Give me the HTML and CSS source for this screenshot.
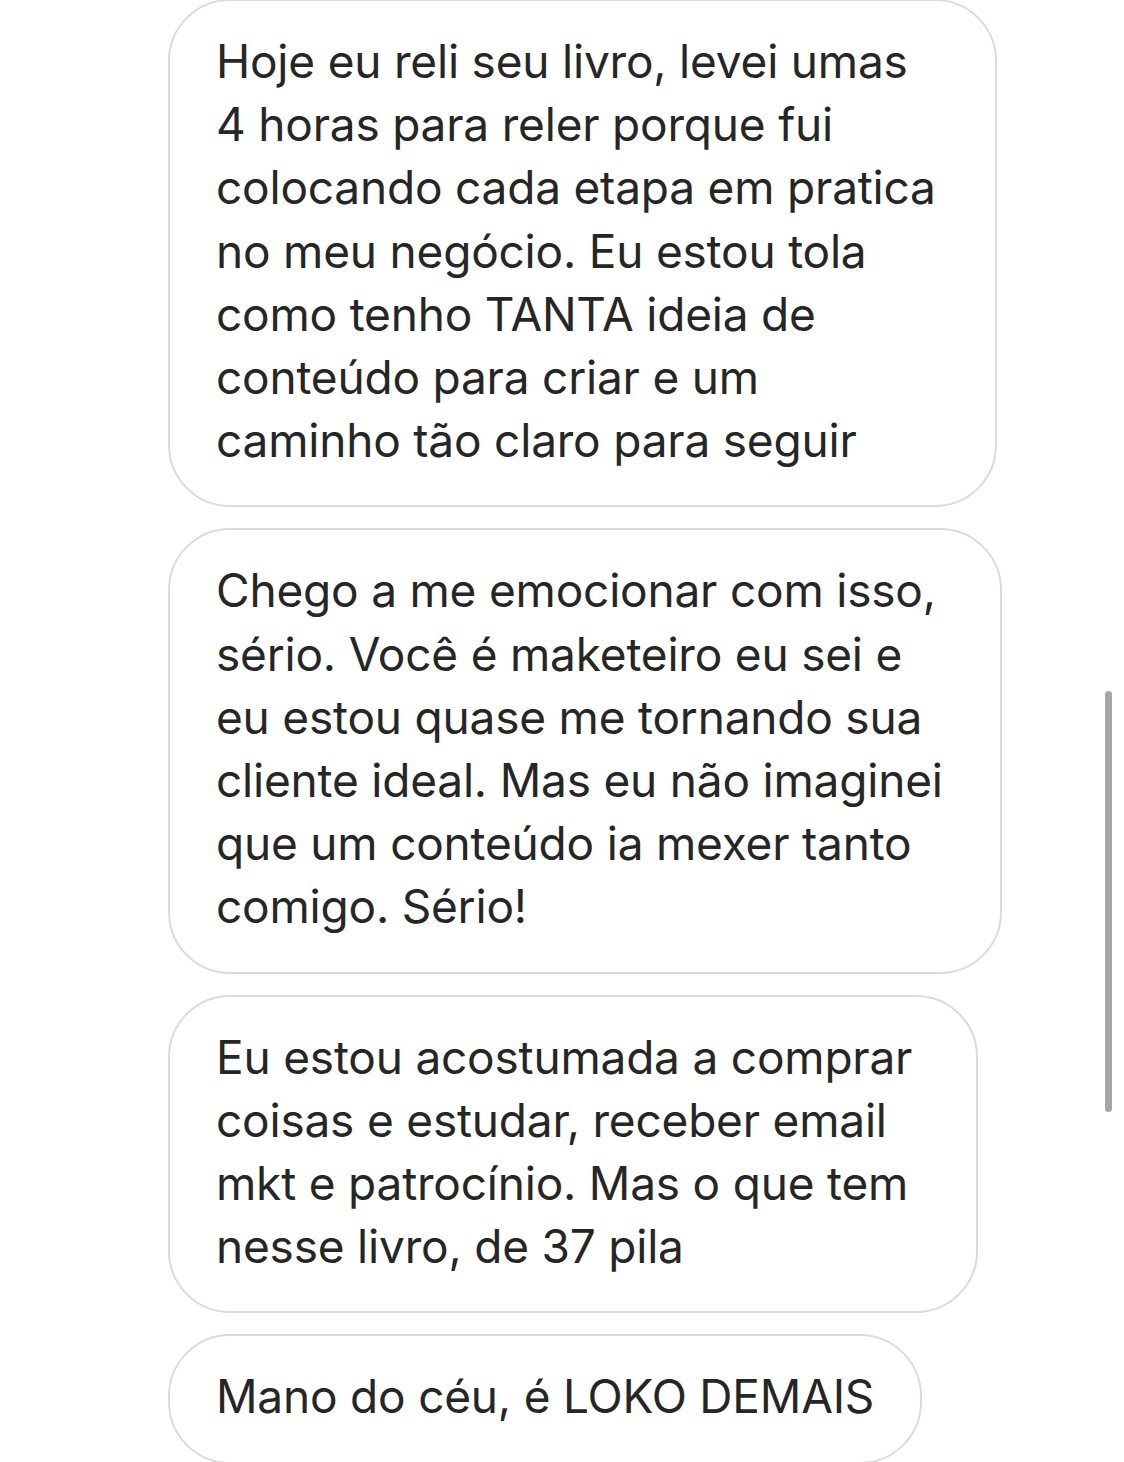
FILE: index.html
```html
<!DOCTYPE html>
<html lang="pt">
<head>
<meta charset="utf-8">
<link rel="stylesheet" href="styles.css">
</head>
<body>
<div class="thread">
  <div class="bubble b1">Hoje eu reli seu livro, levei umas<br>4 horas para reler porque fui<br>colocando cada etapa em pratica<br>no meu negócio. Eu estou tola<br>como tenho TANTA ideia de<br>conteúdo para criar e um<br>caminho tão claro para seguir</div>
  <div class="bubble b2">Chego a me emocionar com isso,<br>sério. Você é maketeiro eu sei e<br>eu estou quase me tornando sua<br>cliente ideal. Mas eu não imaginei<br>que um conteúdo ia mexer tanto<br>comigo. Sério!</div>
  <div class="bubble b3">Eu estou acostumada a comprar<br>coisas e estudar, receber email<br>mkt e patrocínio. Mas o que tem<br>nesse livro, de 37 pila</div>
  <div class="bubble b4">Mano do céu, é LOKO DEMAIS</div>
</div>
<div class="scrollbar"></div>
</body>
</html>
```
FILE: styles.css
```css
html, body {
  margin: 0;
  padding: 0;
  background: #ffffff;
}
body {
  width: 1124px;
  height: 1462px;
  overflow: hidden;
  position: relative;
  font-family: Inter, "Noto Sans", sans-serif;
  color: #262626;
}
.thread {
  display: flex;
  flex-direction: column;
  align-items: flex-start;
  gap: 21px;
  padding-left: 168px;
  margin-top: -1px;
}
.bubble {
  box-sizing: border-box;
  border: 2.5px solid #dbdbdb;
  border-radius: 62px;
  padding: 29px 20px 33px 46px;
  font-size: 46px;
  line-height: 63.2px;
  white-space: nowrap;
  letter-spacing: -0.2px;
}
.b1 { width: 829px; }
.b2 { width: 834px; }
.b3 { width: 810px; }
.b4 { width: 754px; }
.scrollbar {
  position: absolute;
  left: 1105px;
  top: 691px;
  width: 7px;
  height: 421px;
  border-radius: 4px;
  background: #a6a6a6;
}
```
